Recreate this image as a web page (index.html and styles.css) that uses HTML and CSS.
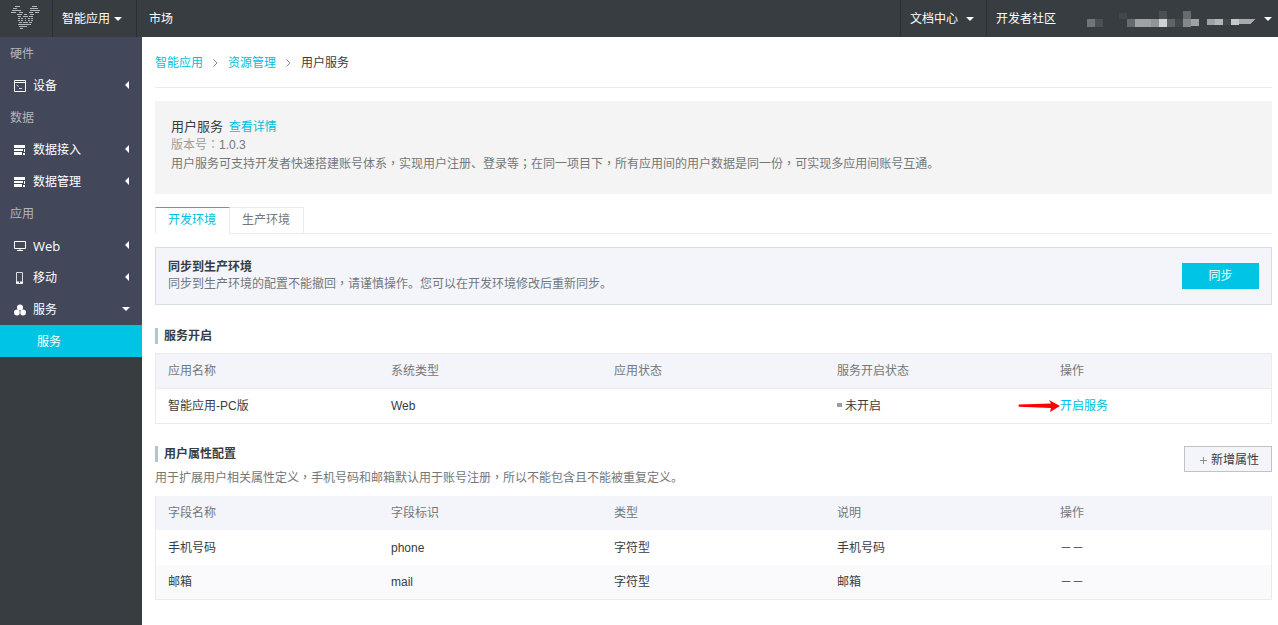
FILE: index.html
```
<!DOCTYPE html>
<html lang="zh-CN">

<head>
    <meta charset="UTF-8">
    <meta name="viewport" content="width=device-width, initial-scale=1.0">
    <title>用户服务</title>
    <link rel="stylesheet" href="styles.css">
</head>
<body>
    <header class="topbar">
        <a class="logo" href="#" aria-label="首页">
            <svg width="30" height="24" viewBox="0 0 30 24" fill="none" stroke="#b4b9bb">
                <path d="M4 1.500h5M21 1.500h5M2 3.500h4M19 3.500h8M1 5.500h9M19 5.500h10M0 7.500h5M8 7.500h4M18 7.500h4M24 7.500h4" />
                <path d="M6 9.500h5M13 9.500h3M19 9.500h4M7 11.500h3M12 11.500h5M18 11.500h4M7 13.500h2M10 13.500h2M14 13.500h1M17 13.500h2M20 13.500h2M7 15.500h2M10 15.500h2M14 15.500h1M17 15.500h2M20 15.500h2M8 17.500h3M12 17.500h5M18 17.500h3" />
                <path d="M7 19.500h13M8 21.500h8M9 23.500h3" />
            </svg>
        </a>
        <button type="button" class="nav-item nav-product">智能应用<span class="caret-down"></span></button>
        <a class="nav-item nav-market" href="#">市场</a>
        <div class="topbar-right">
            <button type="button" class="nav-item nav-docs">文档中心<span class="caret-down"></span></button>
            <a class="nav-item nav-community" href="#">开发者社区</a>
            <button type="button" class="nav-item account" aria-label="账号">
                <svg width="168" height="16" viewBox="0 0 168 16" shape-rendering="crispEdges">
                    <path fill="#707579" d="M0 8h8v8H0z" />
                    <path fill="#4a5053" d="M8 8h8v8H8zM72 0h8v8h-8z" />
                    <path fill="#42474a" d="M32 2h8v6h-8zM88 8h8v8h-8zM136 8h8v6h-8z" />
                    <path fill="#666b6f" d="M40 8h8v8h-8zM80 8h8v8h-8zM96 0h8v8h-8z" />
                    <path fill="#9fa2a5" d="M48 8h16v8H48zM104 8h8v7h-8zM120 8h8v6h-8z" />
                    <path fill="#929598" d="M64 8h8v8h-8z" />
                    <path fill="#cfd2d2" d="M72 8h8v8h-8z" />
                    <path fill="#5f6467" d="M80 8h8v8h-8z" />
                    <path fill="#85888b" d="M96 8h8v8h-8z" />
                    <path fill="#b4b7b8" d="M128 8h8v6h-8z" />
                    <path fill="#c6c8c8" d="M144 8h8v6h-8z" />
                    <path fill="#a8abad" d="M152 8h16l-4 5h-12z" />
                </svg>
                <span class="caret-down"></span>
            </button>
        </div>
    </header>

    <div class="container">
        <nav class="sidebar">
            <h2>硬件</h2>
            <a href="#">
                <svg width="13" height="12" viewBox="0 0 13 12" fill="none" stroke="#fff"><path d="M1.500.5h11v11h-11zM1 2.500h12" /><path d="M3.500 5l2 1.500M6 8.500h3" stroke-width=".8" /></svg>
                设备<span class="caret-left"></span>
            </a>
            <h2>数据</h2>
            <a href="#">
                <svg width="13" height="12" viewBox="0 0 13 12" fill="#fff"><path d="M1 1h11v3H1zM1 5h9v2H1zM1 8h8v3H1zM11 5h1v3h-1zM10 9h2v2h-2z" /></svg>
                数据接入<span class="caret-left"></span>
            </a>
            <a href="#">
                <svg width="13" height="12" viewBox="0 0 13 12" fill="#fff"><path d="M1 1h11v3H1zM1 5h9v2H1zM1 8h8v3H1zM11 5h1v3h-1zM10 9h2v2h-2z" /></svg>
                数据管理<span class="caret-left"></span>
            </a>
            <h2>应用</h2>
            <a href="#">
                <svg width="13" height="12" viewBox="0 0 13 12" fill="none" stroke="#fff"><path d="M1.500 1.500h11v7h-11zM7 9v2M4 10.500h6" /></svg>
                <span class="latin">Web</span><span class="caret-left"></span>
            </a>
            <a href="#">
                <svg width="13" height="12" viewBox="0 0 13 12" fill="none" stroke="#dcdde2"><path d="M3.500.5h6v11h-6z" /><path d="M3 10.500h3M7 10.500h3" stroke="#fff" stroke-width="2" /></svg>
                移动<span class="caret-left"></span>
            </a>
            <a href="#">
                <svg width="13" height="12" viewBox="0 0 13 12" fill="#fff"><circle cx="7" cy="3.500" r="3" /><circle cx="4" cy="8.500" r="3" /><circle cx="10" cy="8.500" r="3" /><path d="M7 6v5" stroke="#42475a" stroke-width=".6" /></svg>
                服务<span class="caret-down"></span>
            </a>
            <a class="sub active" href="#">服务</a>
        </nav>

        <main>
            <div class="breadcrumb">
                <a href="#">智能应用</a>
                <svg width="5" height="8" viewBox="0 0 5 8" fill="none" stroke="#8a8d90"><path d="M.5.5L4 4 .5 7.500" /></svg>
                <a href="#">资源管理</a>
                <svg width="5" height="8" viewBox="0 0 5 8" fill="none" stroke="#8a8d90"><path d="M.5.5L4 4 .5 7.500" /></svg>
                <span>用户服务</span>
            </div>

            <section class="intro">
                <h1>用户服务 <a href="#">查看详情</a></h1>
                <p><span class="label">版本号<span class="mid" lang="zh-TW">：</span></span>1.0.3</p>
                <p>用户服务可支持开发者快速搭建账号体系<span class="mid" lang="zh-TW">，</span>实现用户注册、登录等<span class="mid" lang="zh-TW">；</span>在同一项目下<span class="mid" lang="zh-TW">，</span>所有应用间的用户数据是同一份<span class="mid" lang="zh-TW">，</span>可实现多应用间账号互通。</p>
            </section>

            <div class="tabs">
                <button type="button" class="tab current">开发环境</button>
                <button type="button" class="tab">生产环境</button>
            </div>

            <section class="sync">
                <div>
                    <h3>同步到生产环境</h3>
                    <p>同步到生产环境的配置不能撤回<span class="mid" lang="zh-TW">，</span>请谨慎操作。您可以在开发环境修改后重新同步。</p>
                </div>
                <button type="button" class="btn-primary">同步</button>
            </section>

            <h3 class="section-title">服务开启</h3>
            <table class="service-table">
                <thead>
                    <tr>
                        <th>应用名称</th>
                        <th>系统类型</th>
                        <th>应用状态</th>
                        <th>服务开启状态</th>
                        <th>操作</th>
                    </tr>
                </thead>
                <tbody>
                    <tr>
                        <td>智能应用-PC版</td>
                        <td>Web</td>
                        <td></td>
                        <td><span class="status">未开启</span></td>
                        <td>
                            <span class="action">
                                <svg class="arrow" width="42" height="14" viewBox="0 0 42 14" fill="#f00"><path d="M1 5.500L33 4.500 31 1l11 6-10 6 1-4L1 7.800Q0 6.500 1 5.500z" /></svg>
                                <a href="#">开启服务</a>
                            </span>
                        </td>
                    </tr>
                </tbody>
            </table>

            <div class="attr-head">
                <div>
                    <h3 class="section-title">用户属性配置</h3>
                    <p>用于扩展用户相关属性定义<span class="mid" lang="zh-TW">，</span>手机号码和邮箱默认用于账号注册<span class="mid" lang="zh-TW">，</span>所以不能包含且不能被重复定义。</p>
                </div>
                <button type="button" class="btn-add"><svg width="7" height="7" viewBox="0 0 7 7" stroke="#8a8d90"><path d="M0 3.500h7M3.500 0v7" /></svg>新增属性</button>
            </div>
            <table class="attr-table">
                <thead>
                    <tr>
                        <th>字段名称</th>
                        <th>字段标识</th>
                        <th>类型</th>
                        <th>说明</th>
                        <th>操作</th>
                    </tr>
                </thead>
                <tbody>
                    <tr>
                        <td>手机号码</td>
                        <td>phone</td>
                        <td>字符型</td>
                        <td>手机号码</td>
                        <td>－－</td>
                    </tr>
                    <tr>
                        <td>邮箱</td>
                        <td>mail</td>
                        <td>字符型</td>
                        <td>邮箱</td>
                        <td>－－</td>
                    </tr>
                </tbody>
            </table>
        </main>
    </div>
</body>

</html>
```
FILE: styles.css
```
* {
    box-sizing: border-box;
}

body {
    font-family: "Liberation Sans", "Noto Sans CJK SC", sans-serif;
    font-size: 12px;
    line-height: 18px;
    margin: 0;
    display: flex;
    flex-direction: column;
    min-height: 100vh;
    color: #373d41;
    background-color: #fff;
}

h1, h2, h3, p {
    margin: 0;
    font-size: 12px;
}

a {
    color: #00c1de;
    text-decoration: none;
}

button {
    font: inherit;
    border: none;
    border-radius: 0;
    background: none;
    cursor: pointer;
}

/* centred full-width punctuation */
.mid {
    font-family: "Noto Sans CJK TC", sans-serif;
    line-height: 1;
}

.caret-down {
    width: 0;
    height: 0;
    border: 4px solid transparent;
    border-top-color: #fff;
    border-bottom: 0;
}

.caret-left {
    width: 0;
    height: 0;
    border: 4px solid transparent;
    border-right-color: #fff;
    border-left: 0;
}

.topbar {
    display: flex;
    height: 37px;
    background-color: #373d41;
}

.logo {
    display: flex;
    width: 53px;
    padding: 5px 0 0 11px;
    border-right: 1px solid #2a2f32;
}

.nav-item {
    display: flex;
    align-items: center;
    padding: 0 12px;
    color: #fff;
}

.nav-product {
    gap: 4px;
    width: 84px;
    padding: 0 0 0 9px;
    border-right: 1px solid #2a2f32;
}

.topbar-right {
    display: flex;
    margin-left: auto;
}

.nav-docs {
    gap: 8px;
    padding: 0 12px 0 9px;
    border-left: 1px solid #2a2f32;
}

.nav-community {
    padding: 0 0 0 9px;
    border-left: 1px solid #2a2f32;
}

.account {
    gap: 9px;
    padding: 0 6px 0 31px;
}

.container {
    display: flex;
    flex: 1;
}

.sidebar {
    flex: none;
    width: 142px;
    background-color: #373d41;
}

.sidebar h2,
.sidebar a {
    display: flex;
    align-items: center;
    height: 32px;
    padding: 2px 12px 0 13px;
    background-color: #42475a;
}

.sidebar h2 {
    padding-left: 10px;
    font-weight: normal;
    color: #b4b6bd;
}

.sidebar a {
    gap: 7px;
    color: #fff;
}

.sidebar .latin {
    font-family: "Open Sans", sans-serif;
    font-size: 13px;
}

.sidebar .caret-left,
.sidebar .caret-down {
    margin: 0 0 2px auto;
}

.sidebar .caret-left {
    margin-right: 1px;
}

.sidebar a.sub {
    padding-left: 37px;
}

.sidebar a.active {
    background-color: #00c4e4;
}

main {
    flex: 1;
    min-width: 0;
    padding: 0 6px 24px 13px;
}

.breadcrumb {
    display: flex;
    align-items: center;
    gap: 10px;
    height: 51px;
    padding-top: 1px;
    border-bottom: 1px solid #ebebeb;
}

.intro {
    margin-top: 13px;
    padding: 16px 16px 20px;
    line-height: 19px;
    background-color: #f4f4f4;
    color: #73777a;
}

.intro h1 {
    font-size: 13px;
    font-weight: normal;
    color: #373d41;
}

.intro h1 a {
    font-size: 12px;
    line-height: 1;
    margin-left: 2px;
}

.intro .label {
    color: #9b9ea0;
}

.tabs {
    display: flex;
    margin-top: 13px;
    border-bottom: 1px solid #ebebeb;
}

.tab {
    height: 26px;
    padding: 0 13px 2px 12px;
    border: 1px solid #ebebeb;
    border-width: 1px 1px 0 0;
    color: #73777a;
}

.tab.current {
    height: 27px;
    margin-bottom: -1px;
    border-width: 1px;
    border-top-color: #00c1de;
    border-bottom-color: #fff;
    background-color: #fff;
    color: #00c1de;
}

.sync {
    display: flex;
    align-items: center;
    justify-content: space-between;
    margin-top: 13px;
    padding: 11px 12px;
    border: 1px solid #d9dde4;
    background-color: #f4f5fa;
    line-height: 17px;
    color: #73777a;
}

.sync h3 {
    color: #373d41;
}

.btn-primary {
    width: 77px;
    height: 26px;
    padding: 0;
    background-color: #00c4e4;
    color: #fff;
}

.section-title {
    padding-left: 6px;
    border-left: 3px solid #b4c5cd;
    line-height: 16px;
}

.sync + .section-title {
    margin-top: 23px;
}

table {
    width: 100%;
    table-layout: fixed;
    border-collapse: separate;
    border-spacing: 0;
    border: 1px solid #ebebeb;
}

th,
td {
    height: 35px;
    padding: 0 0 0 12px;
    text-align: left;
}

th {
    background-color: #f4f5fa;
    font-weight: normal;
    color: #73777a;
}

.service-table {
    margin-top: 9px;
}

.service-table th {
    border-bottom: 1px solid #ebebeb;
}

.attr-table {
    margin-top: 9px;
    border-top: 0;
}

.service-table td,
.attr-table th,
.attr-table tr:last-child td {
    height: 34px;
}

.attr-table tr:last-child td {
    background-color: #fafafc;
}

.status::before {
    content: "";
    display: inline-block;
    width: 5px;
    height: 4px;
    margin-right: 3px;
    vertical-align: 3px;
    background-color: #9b9ea0;
}

.action {
    position: relative;
}

/* pointer drawn over the empty part of the row */
.arrow {
    position: absolute;
    right: 100%;
    top: 0;
}

.attr-head {
    display: flex;
    align-items: flex-start;
    justify-content: space-between;
    margin-top: 22px;
}

.attr-head p {
    margin-top: 7px;
    color: #73777a;
}

.btn-add {
    display: flex;
    align-items: center;
    gap: 4px;
    height: 26px;
    padding: 2px 12px 0 15px;
    border: 1px solid #c0c2c5;
    background-color: #f4f5fa;
    color: #373d41;
}
```
